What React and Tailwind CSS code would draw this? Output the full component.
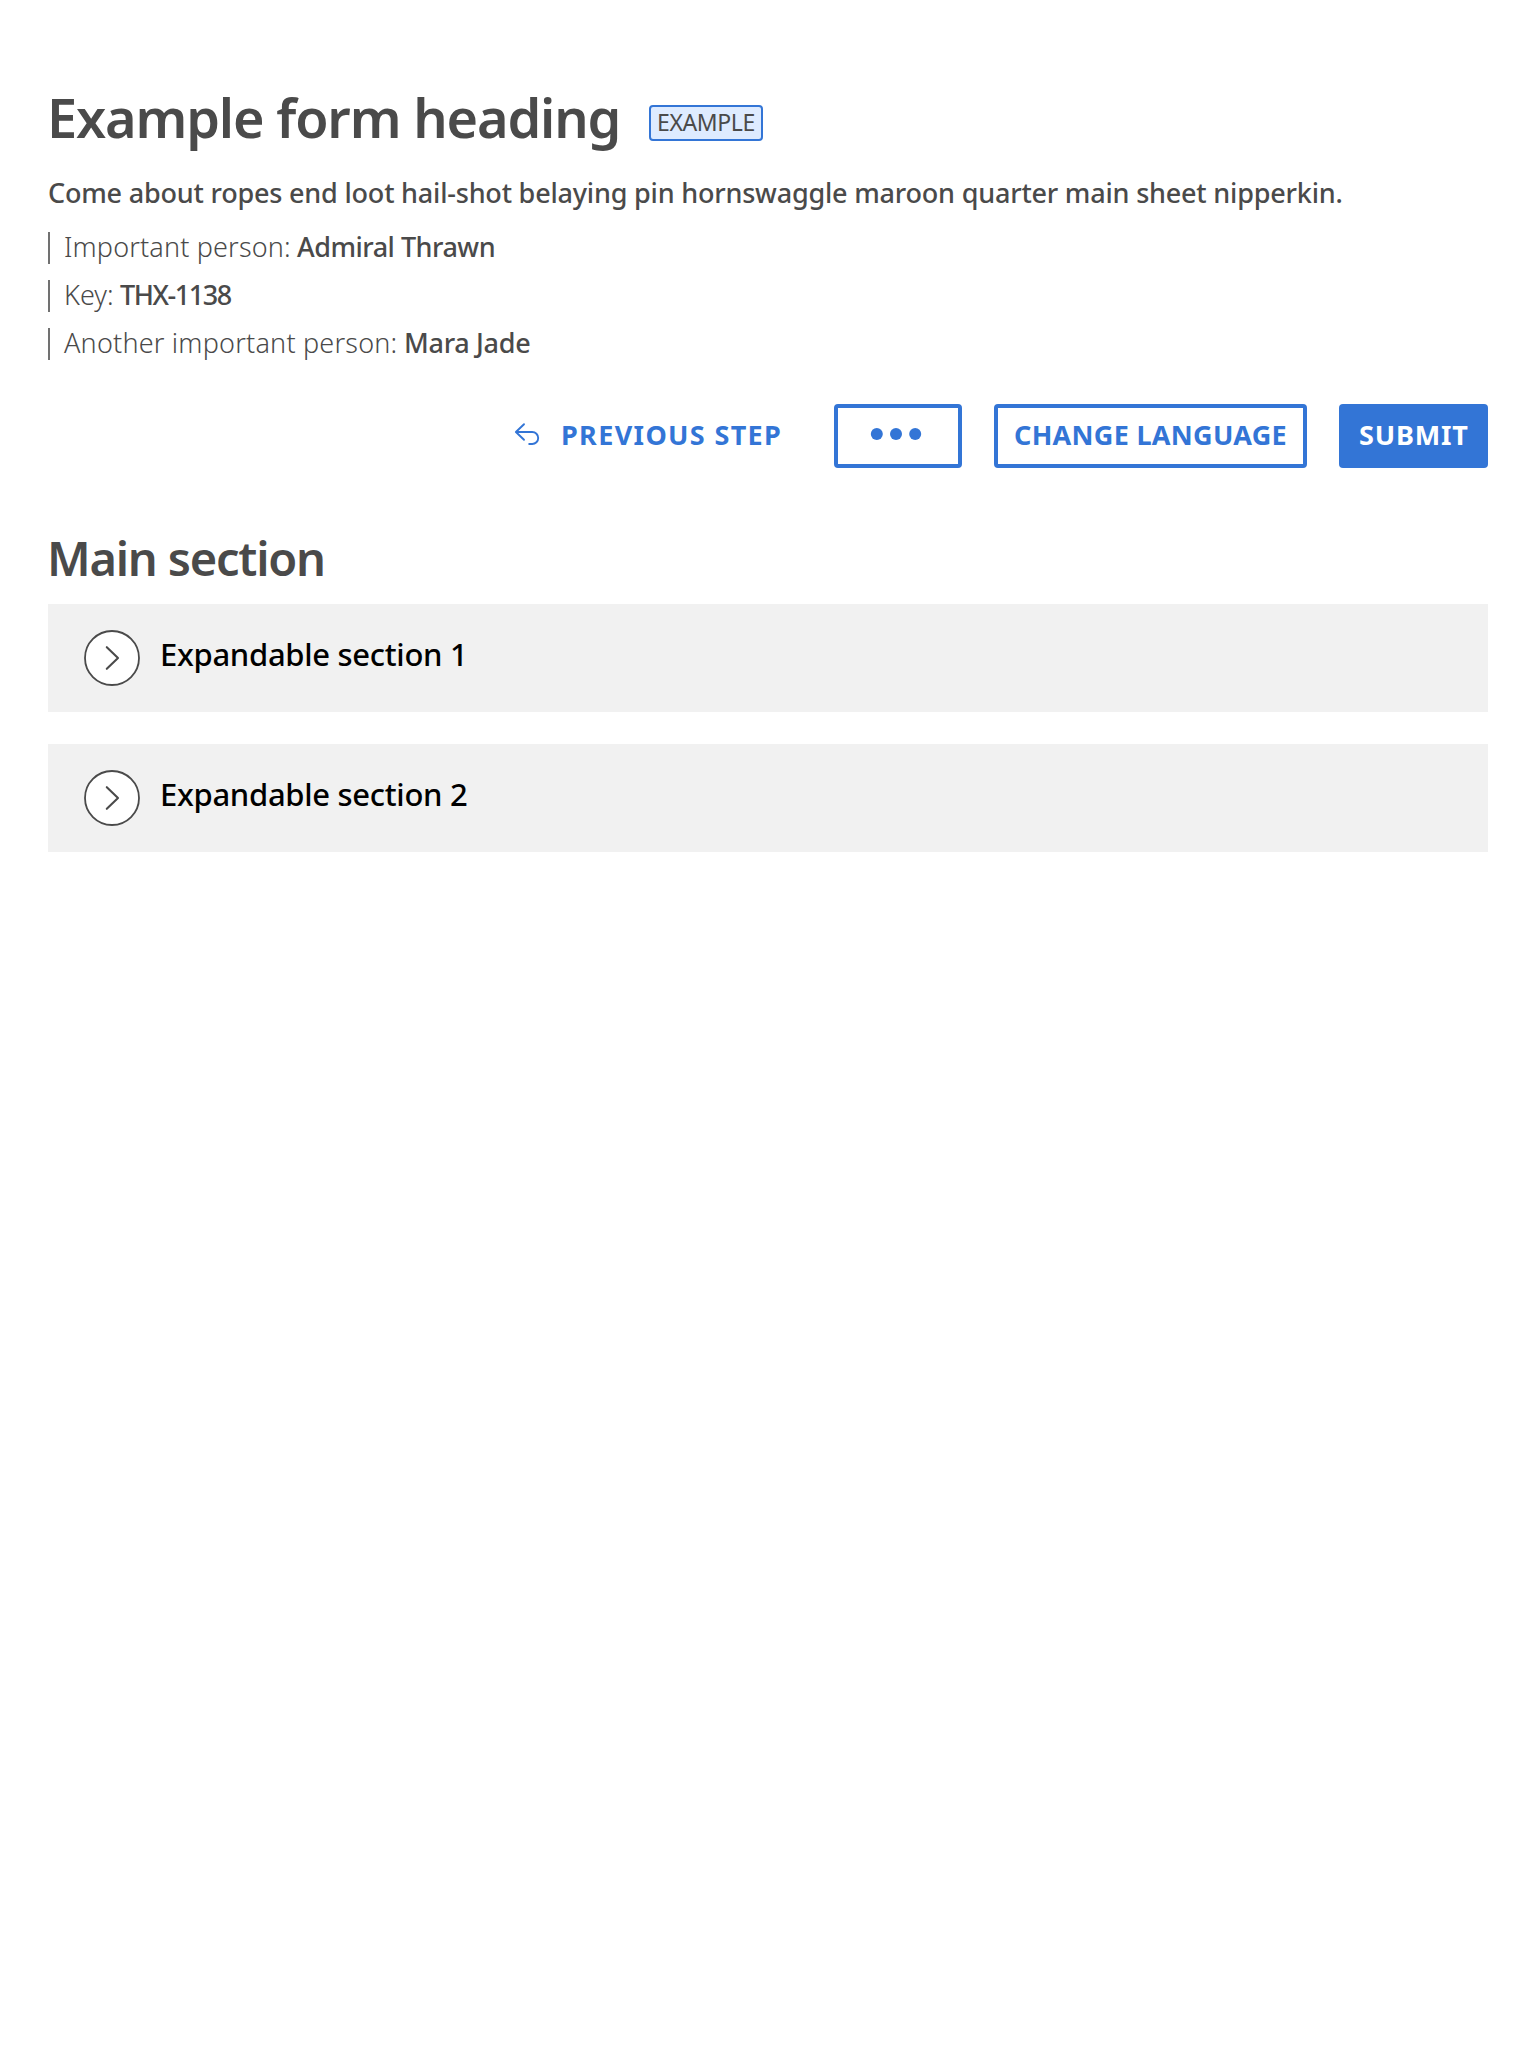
const blue = "#3375d6";

function Tag({ label, labelClass, value, valueClass }) {
  return (
    <li className="h-8 border-l-2 border-[#717171] pl-3.5 text-[27px] leading-[29px] whitespace-nowrap flex">
      <span className={`shrink-0 font-light ${labelClass}`}>{label}</span>
      <span className={`font-medium ${valueClass}`}>{value}</span>
    </li>
  );
}

function Expandable({ title }) {
  return (
    <section className="h-[108px] bg-[#f1f1f1] pl-9 pt-[26px] flex items-start">
      <svg width="56" height="56" viewBox="0 0 56 56" fill="none" stroke="#4a4a4a" strokeLinecap="round" strokeLinejoin="round" className="shrink-0">
        <circle cx="28" cy="28" r="27" fill="#fff" strokeWidth="1.8" />
        <path d="M22.8 17.2 34 28 22.8 38.8" strokeWidth="2.1" />
      </svg>
      <h3 className="ml-5 mt-2 text-[31px] leading-8 font-medium tracking-[-0.3px] text-black">{title}</h3>
    </section>
  );
}

export default function App() {
  return (
    <main className="min-h-[2048px] bg-white px-12 pt-[85px] text-[#4a4a4a] font-['Noto_Sans',sans-serif]">
      <header>
        <div className="flex h-16 items-start">
          <h1 className="w-[576px] whitespace-nowrap text-[54px] leading-[64px] font-semibold tracking-[-1.15px] -ml-px">Example form heading</h1>
          <span className="ml-[26px] mt-5 flex h-9 w-[114px] justify-center rounded border-2 border-[#3375d6] bg-[#deebff] text-[23px] leading-[31px] tracking-[-0.4px]">EXAMPLE</span>
        </div>
        <p className="mt-7 h-8 whitespace-nowrap text-[27px] leading-8 font-medium tracking-[-0.2px]">
          Come about ropes end loot hail-shot belaying pin hornswaggle maroon quarter main sheet nipperkin.
        </p>
        <ul className="mt-[23px] flex flex-col gap-4">
          <Tag label="Important person:" labelClass="w-[233px] tracking-[0.15px]" value="Admiral Thrawn" valueClass="tracking-[-0.5px]" />
          <Tag label="Key:" labelClass="w-14" value="THX-1138" valueClass="tracking-[-1.45px]" />
          <Tag label="Another important person:" labelClass="w-[340px] tracking-[0.2px]" value="Mara Jade" valueClass="tracking-[-0.3px]" />
        </ul>
        <div className="mt-11 flex h-16 justify-end gap-8 text-[27px] leading-[61px] font-bold whitespace-nowrap text-[#3375d6]">
          <button className="mr-[21px] flex w-[267px] items-start">
            <svg width="28" height="24" viewBox="0 0 28 24" fill="none" stroke={blue} strokeWidth="1.9" strokeLinecap="round" strokeLinejoin="round" className="mt-[18px] shrink-0">
              <path d="M10 2.2 1.9 10 10 17.8M2 10H18.2a6 6 0 0 1 0 12H15.2" />
            </svg>
            <span className="ml-[19px] tracking-[1.35px]">PREVIOUS STEP</span>
          </button>
          <button className="flex w-32 items-start justify-center rounded border-4 border-[#3375d6] pt-5 pr-1" aria-label="More actions">
            <svg width="52" height="12" viewBox="0 0 52 12" fill={blue}>
              <circle cx="6.8" cy="6" r="6" />
              <circle cx="26" cy="6" r="6" />
              <circle cx="45.2" cy="6" r="6" />
            </svg>
          </button>
          <button className="flex w-[313px] items-start rounded border-4 border-[#3375d6] pl-4 leading-[53px] tracking-[0.3px]">CHANGE LANGUAGE</button>
          <button className="flex w-[149px] items-start rounded bg-[#3375d6] pl-5 text-white tracking-[0.8px]">SUBMIT</button>
        </div>
      </header>
      <h2 className="mt-[62px] -ml-px h-[74px] text-[47px] leading-[56px] font-semibold tracking-[-1.2px]">Main section</h2>
      <div className="flex flex-col gap-8">
        <Expandable title="Expandable section 1" />
        <Expandable title="Expandable section 2" />
      </div>
    </main>
  );
}
